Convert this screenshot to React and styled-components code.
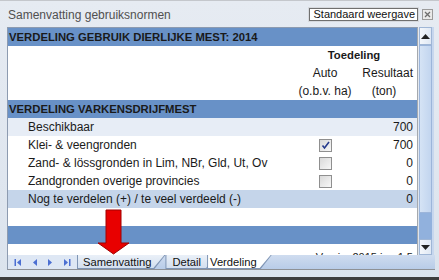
import styled, { createGlobalStyle } from "styled-components";

const GlobalStyle = createGlobalStyle`
  html, body {
    margin: 0;
    padding: 0;
    background: #ffffff;
  }
  * {
    box-sizing: border-box;
  }
`;

const Window = styled.div`
  position: relative;
  width: 439px;
  height: 280px;
  display: flex;
  flex-direction: column;
  overflow: hidden;
  background: linear-gradient(#e6ebf2, #dbe3ed);
  border-top: 1px solid #c4c7cc;
  font-family: "Liberation Sans", Arial, sans-serif;
`;

const TitleBar = styled.div`
  height: 26px;
  display: flex;
  align-items: center;
  padding: 0 6px 0 8px;
`;

const Title = styled.div`
  flex: 1;
  font-size: 12px;
  color: #505050;
  padding-top: 1px;
`;

const ViewButton = styled.div`
  height: 13px;
  line-height: 11px;
  font-size: 11px;
  color: #111;
  background: #fff;
  border: 1px solid #6f6f6f;
  box-shadow: 0 0 0 1px #d6d9de;
  padding: 0 2px 0 3px;
  margin-right: 4px;
  white-space: nowrap;
`;

const CloseBox = styled.div`
  width: 11px;
  height: 11px;
  border: 1px solid #9b9b9b;
  background: #e9e9e9;
  display: flex;
  align-items: center;
  justify-content: center;
`;

const Main = styled.div`
  display: flex;
  height: 228px;
  margin-left: 7px;
`;

const Sheet = styled.div`
  width: 411px;
  border-top: 1px solid #8d9bb0;
  border-left: 1px solid #8d9bb0;
  border-right: 1px solid #a5a9ae;
  background: #fff;
  overflow: hidden;
`;

const tones = {
  head: "#6891c7",
  light: "#e7edf6",
  total: "#c5d5ea",
  white: "#ffffff",
};

const Row = styled.div`
  display: grid;
  grid-template-columns: 287px 60px 58px;
  height: ${(p) => p.$h || 18}px;
  align-items: center;
  padding-right: 4px;
  background: ${(p) => tones[p.$tone || "white"]};
  font-size: ${(p) => (p.$bold ? "11.3px" : "12px")};
  font-weight: ${(p) => (p.$bold ? 700 : 400)};
  color: #1a1a1a;
  overflow: hidden;
`;

const Label = styled.div`
  padding-left: ${(p) => (p.$indent ? 20 : 1)}px;
  white-space: nowrap;
`;

const Cell = styled.div`
  display: flex;
  justify-content: ${(p) => p.$align || "flex-end"};
  white-space: nowrap;
  grid-column: ${(p) => (p.$span ? `span ${p.$span}` : "auto")};
`;

const Version = styled.div`
  grid-column: span 3;
  text-align: right;
  font-size: 11px;
  line-height: 13px;
  padding-top: 7px;
  color: #222;
  align-self: start;
`;

const Box = styled.span`
  width: 13px;
  height: 13px;
  border: 1px solid #8f8f8f;
  background: linear-gradient(135deg, #d9d9d9, #f7f7f7);
  display: flex;
  align-items: center;
  justify-content: center;
`;

const ScrollBar = styled.div`
  width: 15px;
  margin-left: 1px;
  display: flex;
  flex-direction: column;
  background: #91b1dd;
  border-right: 2px solid #c7d7ee;
`;

const ScrollButton = styled.div`
  height: ${(p) => p.$h}px;
  background: linear-gradient(90deg, #f4f7fb, #dfe8f4);
  border: 1px solid #9fb6d6;
  display: flex;
  align-items: center;
  justify-content: center;
`;

const Thumb = styled.div`
  flex: 1;
  background: linear-gradient(90deg, #d5e3f5, #c2d5ef);
  border: 1px solid #9cb5da;
`;

const Track = styled.div`
  height: 26px;
`;

const TabBar = styled.div`
  display: flex;
  align-items: stretch;
  height: 15px;
  margin-left: 7px;
  margin-right: 4px;
  background: linear-gradient(#cfdcef, #b8cce8);
  border-left: 1px solid #8d9bb0;
  border-bottom: 1px solid #8e9196;
`;

const Nav = styled.div`
  width: 69px;
  display: flex;
  align-items: center;
  justify-content: space-around;
  background: #dee7f4;
  padding: 0 2px;
`;

const Tab = styled.div`
  position: relative;
  height: 14px;
  padding: 0 ${(p) => p.$padR}px 0 ${(p) => p.$padL}px;
  margin-left: ${(p) => p.$ml || 0}px;
  z-index: ${(p) => (p.$active ? 2 : 1)};
  font-size: 11.2px;
  line-height: 14px;
  color: #111;
  background: #7f95b5;
  clip-path: polygon(0 0, 100% 0, calc(100% - 11px) 100%, 0 100%);

  &::before {
    content: "";
    position: absolute;
    inset: 0 1px 1px 1px;
    background: ${(p) => (p.$active ? "#ffffff" : "linear-gradient(#eaf0f8, #d3dfef)")};
    clip-path: polygon(0 0, 100% 0, calc(100% - 11px) 100%, 0 100%);
    z-index: -1;
  }
`;

const TabText = styled.span`
  position: relative;
`;

const BottomEdge = styled.div`
  margin-top: auto;
  height: 3px;
  background: #3d3d3d;
`;

const Arrow = styled.svg`
  position: absolute;
  left: 97px;
  top: 208px;
  z-index: 5;
`;

const NavIcon = ({ dir, end }) => (
  <svg width="8" height="9" viewBox="0 0 8 9">
    {dir === "left" ? (
      <>
        {end && <rect x="0.5" y="1" width="1.5" height="7" fill="#4c6fd2" />}
        <path d="M7 1 L3 4.5 L7 8 Z" fill="#4c6fd2" />
      </>
    ) : (
      <>
        <path d="M1 1 L5 4.5 L1 8 Z" fill="#4c6fd2" />
        {end && <rect x="6" y="1" width="1.5" height="7" fill="#4c6fd2" />}
      </>
    )}
  </svg>
);

const Check = ({ checked }) => (
  <Box>
    {checked && (
      <svg width="9" height="9" viewBox="0 0 9 9">
        <path d="M1.5 4.5 L3.5 7 L8 1" fill="none" stroke="#253a8c" strokeWidth="1.6" />
      </svg>
    )}
  </Box>
);

const rows = [
  { label: "Beschikbaar", value: "700", tone: "light" },
  { label: "Klei- & veengronden", value: "700", box: true, checked: true },
  { label: "Zand- & lössgronden in Lim, NBr, Gld, Ut, Ov", value: "0", box: true },
  { label: "Zandgronden overige provincies", value: "0", box: true },
  { label: "Nog te verdelen (+) / te veel verdeeld (-)", value: "0", tone: "total" },
];

export default function App() {
  return (
    <>
      <GlobalStyle />
      <Window>
        <TitleBar>
          <Title>Samenvatting gebruiksnormen</Title>
          <ViewButton>Standaard weergave</ViewButton>
          <CloseBox>
            <svg width="7" height="7" viewBox="0 0 7 7">
              <path d="M1 1 L6 6 M6 1 L1 6" stroke="#6d6d6d" strokeWidth="1.3" />
            </svg>
          </CloseBox>
        </TitleBar>

        <Main>
          <Sheet>
            <Row $tone="head" $bold>
              <Label>VERDELING GEBRUIK DIERLIJKE MEST: 2014</Label>
            </Row>
            <Row $bold>
              <Label />
              <Cell $span={2} $align="center">Toedeling</Cell>
            </Row>
            <Row>
              <Label />
              <Cell $align="center">Auto</Cell>
              <Cell>Resultaat</Cell>
            </Row>
            <Row>
              <Label />
              <Cell $align="center">(o.b.v. ha)</Cell>
              <Cell $align="center">(ton)</Cell>
            </Row>
            <Row $tone="head" $bold>
              <Label>VERDELING VARKENSDRIJFMEST</Label>
            </Row>
            {rows.map((r) => (
              <Row key={r.label} $tone={r.tone}>
                <Label $indent>{r.label}</Label>
                <Cell $align="center">{r.box && <Check checked={r.checked} />}</Cell>
                <Cell>{r.value}</Cell>
              </Row>
            ))}
            <Row />
            <Row $tone="head" />
            <Row $h={11}>
              <Version>Versie: 2015 jan 1.5</Version>
            </Row>
          </Sheet>

          <ScrollBar>
            <ScrollButton $h={18}>
              <svg width="9" height="5" viewBox="0 0 9 5">
                <path d="M0 5 L4.5 0 L9 5 Z" fill="#222" />
              </svg>
            </ScrollButton>
            <Thumb />
            <Track />
            <ScrollButton $h={16}>
              <svg width="9" height="5" viewBox="0 0 9 5">
                <path d="M0 0 L4.5 5 L9 0 Z" fill="#222" />
              </svg>
            </ScrollButton>
          </ScrollBar>
        </Main>

        <TabBar>
          <Nav>
            <NavIcon dir="left" end />
            <NavIcon dir="left" />
            <NavIcon dir="right" />
            <NavIcon dir="right" end />
          </Nav>
          <Tab $padL={6} $padR={14}>
            <TabText>Samenvatting</TabText>
          </Tab>
          <Tab $padL={7} $padR={17}>
            <TabText>Detail</TabText>
          </Tab>
          <Tab $padL={3} $padR={15} $ml={-11} $active>
            <TabText>Verdeling</TabText>
          </Tab>
        </TabBar>

        <BottomEdge />

        <Arrow width="34" height="46" viewBox="0 0 34 46">
          <path
            d="M9 1 H24 V34 H32 L16.5 45 L1 34 H9 Z"
            fill="#e80000"
            stroke="#a00000"
            strokeWidth="1"
          />
        </Arrow>
      </Window>
    </>
  );
}
